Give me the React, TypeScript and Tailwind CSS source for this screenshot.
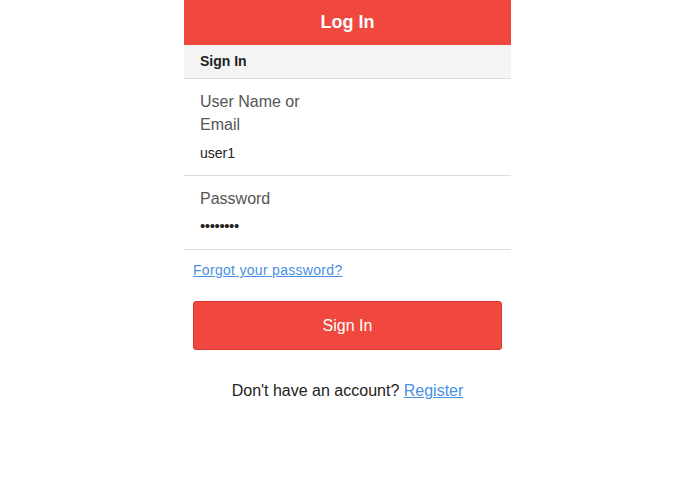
export default function App() {
  return (
    <div
      className="flex min-h-[494px] justify-center bg-white"
      style={{ fontFamily: '"Liberation Sans", Arial, sans-serif' }}
    >
      <div className="w-[327px]">
        <div className="flex h-[45px] items-center justify-center bg-[#f0483e] text-[18px] font-bold text-white">
          Log In
        </div>
        <div className="flex h-[34px] items-center border-b border-[#dddddd] bg-[#f4f4f4] px-4 text-[14px] font-bold text-[#222]">
          Sign In
        </div>
        <div className="border-b border-[#dddddd] px-4 pt-[11px] pb-[13px]">
          <label className="block w-[120px] text-[16px] leading-[23px] text-[#555]">
            User Name or Email
          </label>
          <div className="mt-[8px] text-[14px] leading-[18px] text-[#222]">user1</div>
        </div>
        <div className="border-b border-[#dddddd] px-4 pt-[11px] pb-[14px]">
          <label className="block text-[16px] leading-[23px] text-[#555]">Password</label>
          <div className="mt-[7px] text-[15px] leading-[18px] tracking-[-0.4px] text-[#222]">
            ••••••••
          </div>
        </div>
        <div className="px-[9px]">
          <a
            href="#"
            className="mt-[11px] block text-[14px] leading-[18px] tracking-[0.3px] text-[#4a90e2] underline"
          >
            Forgot your password?
          </a>
          <button className="mt-[22px] flex h-[49px] w-full items-center justify-center rounded-[3px] border border-[#d9362d] bg-[#f0483e] text-[16px] text-white">
            Sign In
          </button>
          <p className="mt-[31px] text-center text-[16px] leading-[20px] text-[#222]">
            Don't have an account?{' '}
            <a href="#" className="text-[#4a90e2] underline">
              Register
            </a>
          </p>
        </div>
      </div>
    </div>
  )
}
